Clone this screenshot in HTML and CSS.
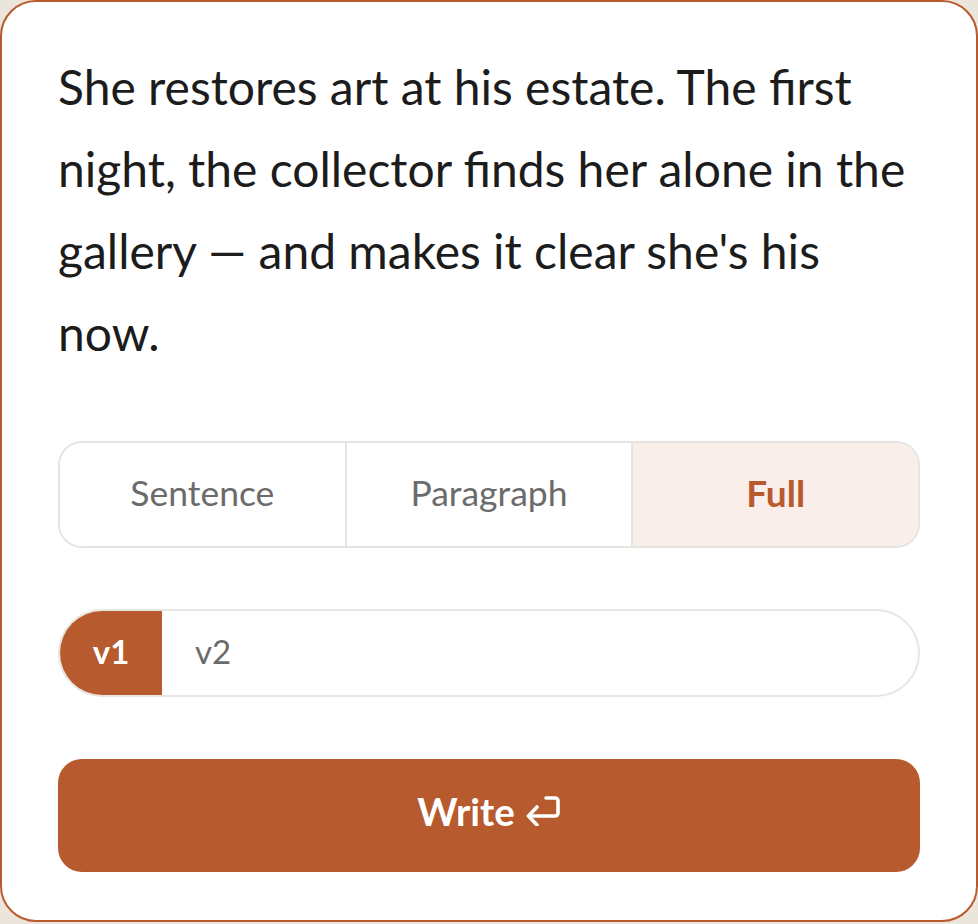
FILE: index.html
```html
<!DOCTYPE html>
<html>
<head>
<meta charset="utf-8">
<link rel="stylesheet" href="styles.css">
</head>
<body>
<div class="card">
  <p class="prompt">She restores art at his estate. The first night, the collector finds her alone in the gallery — and makes it clear she's his now.</p>
  <div class="segments">
    <button class="seg">Sentence</button>
    <button class="seg">Paragraph</button>
    <button class="seg active">Full</button>
  </div>
  <div class="versions">
    <span class="ver active">v1</span>
    <span class="ver">v2</span>
  </div>
  <button class="write">Write
    <svg class="enter" viewBox="0 0 36 31" width="36" height="31" fill="none" stroke="currentColor" stroke-width="3.6" stroke-linecap="round" stroke-linejoin="round">
      <path d="M21 3h9a3 3 0 0 1 3 3v12a3 3 0 0 1-3 3H4"/>
      <path d="M12 12l-8.5 9 8.5 9"/>
    </svg>
  </button>
</div>
</body>
</html>
```
FILE: styles.css
```css
* { box-sizing: border-box; }
html, body { margin: 0; padding: 0; }
body {
  background: #ece5dc;
  font-family: Lato, "Noto Sans", sans-serif;
  width: 978px;
  height: 924px;
}
.card {
  width: 978px;
  height: 922px;
  background: #fff;
  border: 2px solid #b85a2e;
  border-radius: 36px;
  padding: 44px 56px 0;
  display: flex;
  flex-direction: column;
}
.prompt {
  margin: 0;
  font-size: 48px;
  line-height: 82px;
  color: #1c1c1c;
}
.segments {
  margin-top: 67px;
  height: 107px;
  display: flex;
  border: 2px solid #e6e4e1;
  border-radius: 24px;
  overflow: hidden;
}
.seg {
  flex: 1;
  border: 0;
  background: #fff;
  font-family: inherit;
  font-size: 35.5px;
  color: #6b6b6b;
  padding: 0 0 4px;
}
.seg + .seg { border-left: 2px solid #e6e4e1; }
.seg.active {
  background: #f9eeea;
  color: #b85a2e;
  font-weight: 700;
  font-size: 37px;
}
.versions {
  margin-top: 61px;
  height: 88px;
  display: flex;
  align-items: stretch;
  border: 2px solid #e8e6e3;
  border-radius: 44px;
  overflow: hidden;
}
.ver {
  display: flex;
  align-items: center;
  justify-content: center;
  width: 102px;
  font-size: 33px;
  color: #6b6b6b;
  padding-bottom: 4px;
}
.ver.active {
  background: #b75a2e;
  color: #fff;
  font-weight: 700;
}
.write {
  margin-top: 62px;
  height: 113px;
  border: 0;
  border-radius: 24px;
  background: #b75a2e;
  color: #fff;
  font-family: inherit;
  font-size: 38.5px;
  font-weight: 700;
  display: flex;
  align-items: center;
  justify-content: center;
  gap: 10px;
  padding: 0 0 10px;
}
.enter { display: block; }
```
